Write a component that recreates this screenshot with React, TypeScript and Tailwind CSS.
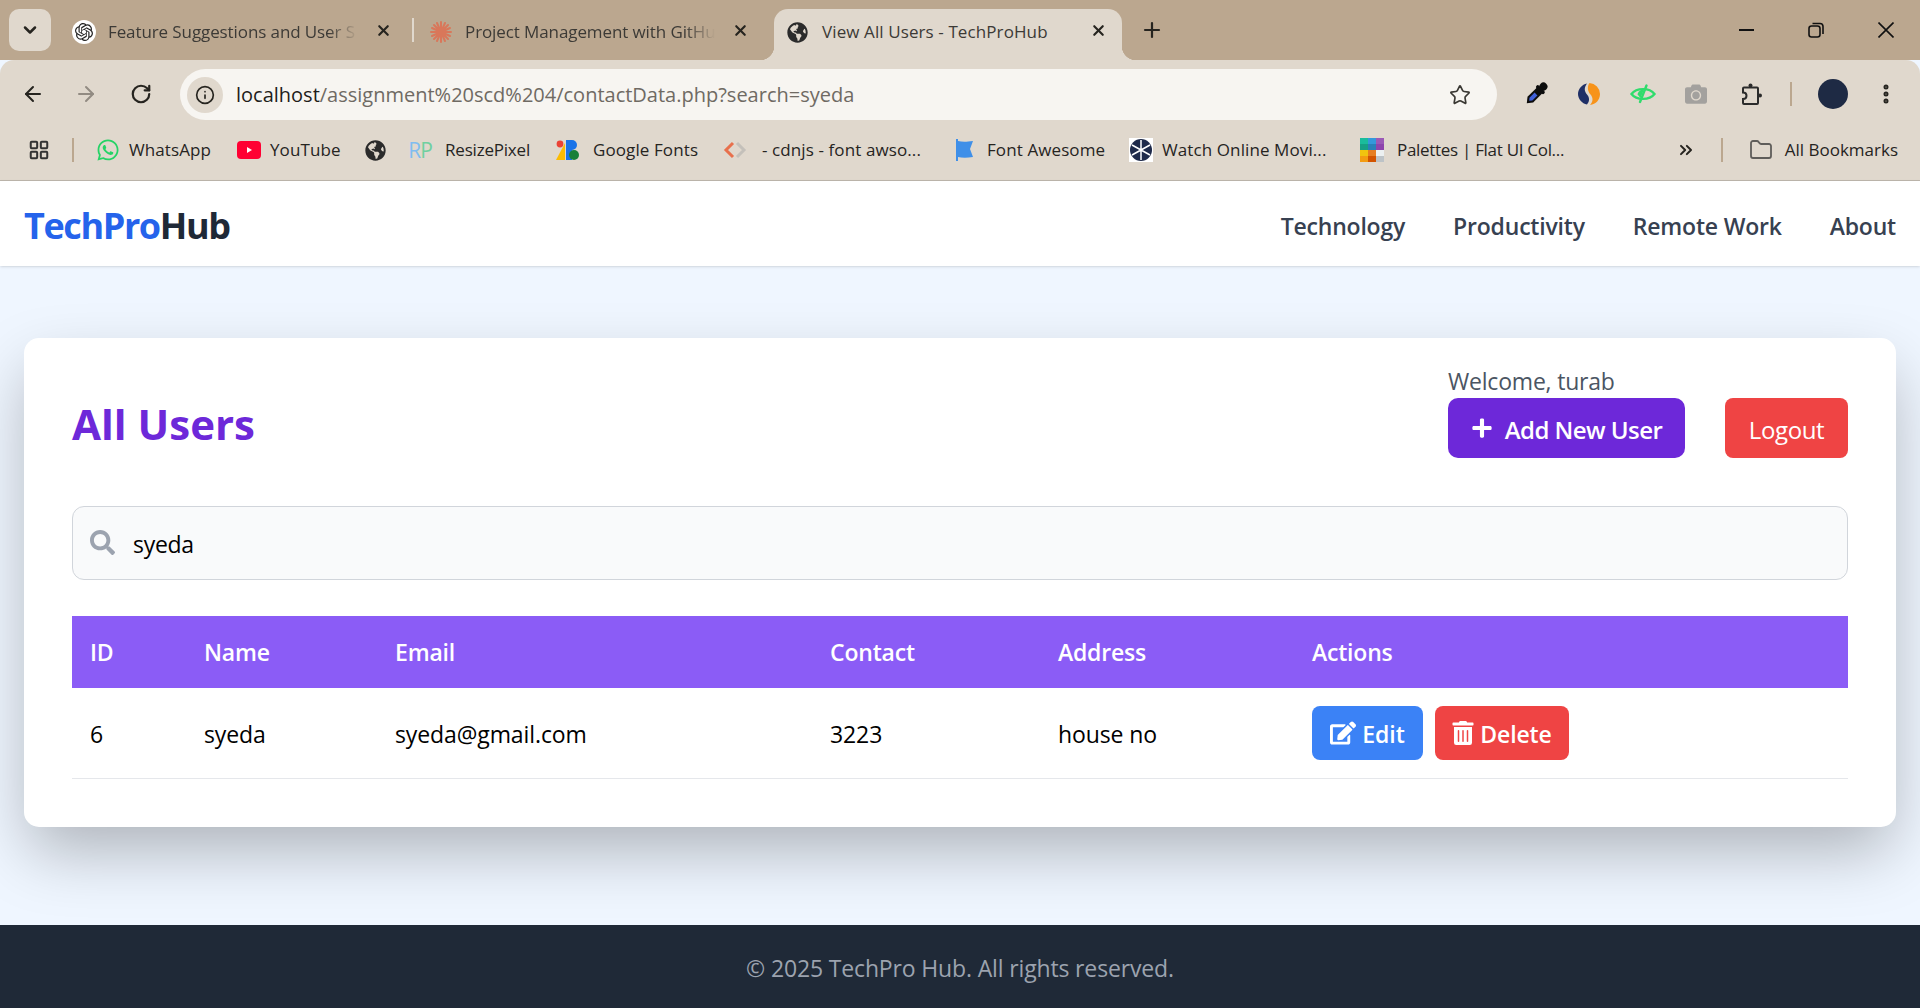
import { FaEdit, FaCamera, FaGlobeAmericas, FaPlus, FaSearch, FaTrashAlt, FaWhatsapp } from "react-icons/fa";
import { SiOpenai } from "react-icons/si";
import { ArrowLeft, ArrowRight, ChevronDown, ChevronsRight, EllipsisVertical, Folder, Info, LayoutGrid, Plus, RotateCw, Star, X } from "lucide-react";

const Globe = () => <FaGlobeAmericas className="w-[21px] h-[21px] text-[#2b2b2b]" />;

const ClaudeIcon = () => (
  <svg viewBox="0 0 24 24" className="w-6 h-6" stroke="#d9775a" strokeWidth="2" strokeLinecap="round">
    <path d="M12 2v20M2 12h20M5 5l14 14M19 5L5 19M8 3l8 18M16 3L8 21M3 8l18 8M21 8L3 16" />
  </svg>
);

const YouTubeIcon = () => (
  <svg viewBox="0 0 24 18" className="w-6 h-[18px]">
    <rect width="24" height="18" rx="4" fill="#ff0033" />
    <path d="M10 6l5 3-5 3z" fill="#fff" />
  </svg>
);

const GoogleFontsIcon = () => (
  <svg viewBox="0 0 24 20" className="w-6 h-5">
    <circle cx="4" cy="4" r="3.4" fill="#ea4335" />
    <path d="M0 20L9 3v17z" fill="#fbbc04" />
    <path d="M10 0h6a5 5 0 010 10h-6z" fill="#1a73e8" />
    <path d="M10 10h6v10h-6z" fill="#1a73e8" />
    <circle cx="18" cy="15" r="5" fill="#188038" />
  </svg>
);

const CdnjsIcon = () => (
  <svg viewBox="0 0 24 20" className="w-6 h-5" fill="none" strokeWidth="3">
    <path d="M10 3l-7 7 7 7" stroke="#e8704c" />
    <path d="M14 3l7 7-7 7" stroke="#c4c0ba" />
  </svg>
);

const FlagIcon = () => (
  <svg viewBox="0 0 20 24" className="w-5 h-6">
    <path d="M1 1h2v2c4 1 8 1 15 0l-3 8 3 8c-6 1-11 1-15 0v4H1z" fill="#3f8fe8" />
  </svg>
);

const ReelIcon = () => (
  <svg viewBox="0 0 24 24" className="w-6 h-6">
    <rect width="24" height="24" fill="#fff" />
    <circle cx="12" cy="12" r="11" fill="#1e2a4a" />
    <path d="M12 2v20M3 7l18 10M21 7L3 17" stroke="#fff" strokeWidth="1.5" />
  </svg>
);

const PaletteIcon = () => (
  <svg viewBox="0 0 24 24" className="w-6 h-6">
    <rect width="8" height="6" fill="#1abc9c" />
    <rect x="8" width="8" height="6" fill="#3498db" />
    <rect x="16" width="8" height="6" fill="#9b59b6" />
    <rect y="6" width="8" height="6" fill="#16a085" />
    <rect x="8" y="6" width="8" height="6" fill="#2980b9" />
    <rect x="16" y="6" width="8" height="6" fill="#8e44ad" />
    <rect y="12" width="8" height="6" fill="#f1c40f" />
    <rect x="8" y="12" width="8" height="6" fill="#e67e22" />
    <rect x="16" y="12" width="8" height="6" fill="#ecf0f1" />
    <rect y="18" width="8" height="6" fill="#f39c12" />
    <rect x="8" y="18" width="8" height="6" fill="#d35400" />
    <rect x="16" y="18" width="8" height="6" fill="#bdc3c7" />
  </svg>
);

const DropperIcon = () => (
  <svg viewBox="0 0 24 24" className="w-6 h-6">
    <g transform="rotate(45 12 12)">
      <circle cx="12" cy="1.5" r="4" fill="#0d0d0d" />
      <rect x="6.5" y="4" width="11" height="3.6" rx="1.8" fill="#0d0d0d" />
      <path d="M8 7h8v13l-4 5-4-5z" fill="#0d0d0d" />
      <path d="M10 12h4v7.2l-2 2.5-2-2.5z" fill="#3f5fd8" />
    </g>
  </svg>
);

const SwirlIcon = () => (
  <svg viewBox="0 0 24 24" className="w-6 h-6">
    <path d="M10 1.5c-3 4-3 7.5 0 11 3 3.500 2.500 7 0 10-5-1-9-5.500-9-10.500S5 2.500 10 1.500z" fill="#1f2f66" />
    <path d="M12.500 1A11 11 0 0123 12c0 5.500-4 10.500-10 11 3-3 3.500-7 .5-10.500-3-3.500-3.500-8-1-11.500z" fill="#f7931a" />
  </svg>
);

const EyeIcon = () => (
  <svg viewBox="0 0 26 24" className="w-[26px] h-6" fill="none" stroke="#2fdc6c" strokeWidth="2.4" strokeLinecap="round">
    <path d="M1.500 12c5-6.500 18-6.500 23 0-5 6.500-18 6.500-23 0z" />
    <path d="M16.500 3.500L10 20" />
    <path d="M7.500 12.500c.5-3 3-5 6.500-5l-3.500 8.500z" fill="#2fdc6c" stroke="none" />
  </svg>
);

const ExtensionIcon = () => (
  <svg viewBox="0 0 24 24" className="w-6 h-6" fill="#2b2b2b" stroke="#2b2b2b">
    <path d="M4 5.500h13a1 1 0 011 1v14.500a1 1 0 01-1 1H4a1 1 0 01-1-1v-4c2 0 3.500-1 3.500-3.250S5 10.500 3 10.500v-4a1 1 0 011-1z" fill="none" strokeWidth="2" />
    <circle cx="10.500" cy="3.500" r="2" stroke="none" />
    <circle cx="20" cy="13.500" r="2" stroke="none" />
  </svg>
);

interface TabProps {
  icon: React.ReactNode;
  title: string;
}

const Tab: React.FC<TabProps> = ({ icon, title }) => (
  <div className="flex items-center w-[361px] h-[46px] shrink-0 pl-[21px]">
    <span className="w-6 h-6 flex items-center justify-center shrink-0">{icon}</span>
    <span className="ml-3 w-[250px] whitespace-nowrap text-[17px] text-[#3c3a36] tracking-[-0.1px] [mask-image:linear-gradient(to_right,black_88%,transparent)]">{title}</span>
    <X className="ml-[17px] -mt-[3px] w-[17px] h-[17px] text-[#26241f] shrink-0" strokeWidth={3} />
  </div>
);

const bookmarks = [
  { icon: <FaWhatsapp className="w-6 h-6 text-[#25d366]" />, label: "WhatsApp", w: "w-[141px]", text: "ml-[9px] tracking-[0.1px]" },
  { icon: <YouTubeIcon />, label: "YouTube", w: "w-[126px]", text: "ml-[9px] tracking-[0.1px]" },
  { icon: <Globe />, label: "", w: "w-[45px]", text: "" },
  { icon: <span className="text-[21px] leading-none text-[#7fbdf0] tracking-[-1px]">R<span className="text-[#6fd0a0]">P</span></span>, label: "ResizePixel", w: "w-[148px]", text: "ml-[13px] tracking-[-0.2px]" },
  { icon: <GoogleFontsIcon />, label: "Google Fonts", w: "w-[167px]", text: "ml-[13px] tracking-[0.1px]" },
  { icon: <CdnjsIcon />, label: "- cdnjs - font awso...", w: "w-[230px]", text: "ml-[15px] tracking-[0.1px]" },
  { icon: <FlagIcon />, label: "Font Awesome", w: "w-[176px]", text: "ml-[10px] tracking-[0.1px]" },
  { icon: <ReelIcon />, label: "Watch Online Movi...", w: "w-[231px]", text: "ml-[9px] tracking-[0.1px]" },
  { icon: <PaletteIcon />, label: "Palettes | Flat UI Col...", w: "", text: "ml-[13px] tracking-[-0.3px]" },
];

const columns = [
  { label: "ID", w: "w-[114px]" },
  { label: "Name", w: "w-[191px]" },
  { label: "Email", w: "w-[435px]" },
  { label: "Contact", w: "w-[228px]" },
  { label: "Address", w: "w-[254px]" },
  { label: "Actions", w: "" },
];

const App = () => {
  return (
    <div className="min-h-screen flex flex-col bg-[#eff6ff] font-['Open_Sans','Noto_Sans',sans-serif] overflow-hidden">
      {/* browser tab strip */}
      <div className="h-[60px] bg-[#bba78f] flex items-start pt-[9px] shrink-0">
        <div className="ml-[9px] w-[42px] h-[42px] rounded-[10px] bg-[#e0d8cd] flex items-center justify-center shrink-0">
          <ChevronDown className="w-5 h-5 text-[#26241f]" strokeWidth={3} />
        </div>
        <Tab icon={<span className="w-6 h-6 rounded-full bg-white flex items-center justify-center"><SiOpenai className="w-[18px] h-[18px] text-[#222]" /></span>} title="Feature Suggestions and User S" />
        <div className="w-[2px] h-6 mt-[9px] bg-[#e0d8cd] shrink-0" />
        <div className="-ml-[6px] flex">
          <Tab icon={<ClaudeIcon />} title="Project Management with GitHu" />
        </div>
        <div className="relative ml-[5px] w-[348px] h-[51px] bg-[#e0d8cd] rounded-t-[14px] flex items-center pl-[13px] pb-[5px] shrink-0 before:absolute before:bottom-0 before:-left-[14px] before:w-[14px] before:h-[14px] before:bg-[radial-gradient(circle_at_0_0,transparent_14px,#e0d8cd_14.5px)] after:absolute after:bottom-0 after:-right-[14px] after:w-[14px] after:h-[14px] after:bg-[radial-gradient(circle_at_100%_0,transparent_14px,#e0d8cd_14.5px)]">
          <Globe />
          <span className="ml-[14px] w-[255px] whitespace-nowrap text-[17px] text-[#3c3a36] tracking-[0.1px]">View All Users - TechProHub</span>
          <X className="ml-[13px] -mt-[3px] w-[17px] h-[17px] text-[#26241f]" strokeWidth={3} />
        </div>
        <Plus className="ml-[18px] mt-[9px] w-6 h-6 text-[#26241f]" strokeWidth={2.2} />
        <div className="ml-auto flex items-center h-[42px]">
          <div className="w-[15px] h-[2px] bg-[#111]" />
          <svg viewBox="0 0 16 16" className="ml-[54px] w-[16px] h-[16px]" fill="none" stroke="#111" strokeWidth="1.6">
            <rect x="1" y="4" width="11" height="11" rx="2.500" />
            <path d="M4.500 1.500h7.500a3 3 0 013 3v7.500" />
          </svg>
          <svg viewBox="0 0 16 16" className="ml-[54px] mr-[26px] w-4 h-4" fill="none" stroke="#111" strokeWidth="1.6">
            <path d="M.500.500l15 15M15.500.500l-15 15" />
          </svg>
        </div>
      </div>

      {/* address bar */}
      <div className="h-[60px] bg-[#e0d8cd] rounded-t-[14px] flex items-end shrink-0">
        <div className="h-[60px] w-[180px] flex items-center shrink-0 pl-[21px] pt-[8px]">
          <ArrowLeft className="w-6 h-6 text-[#26241f]" strokeWidth={2} />
          <ArrowRight className="ml-[29px] w-6 h-6 text-[#928b82]" strokeWidth={2} />
          <RotateCw className="ml-[32px] w-[22px] h-[22px] text-[#26241f]" strokeWidth={2.4} />
        </div>
        <div className="w-[1317px] h-[51px] rounded-full bg-[#f7f5f1] flex items-center pl-[7px] shrink-0">
          <span className="w-9 h-9 rounded-full bg-[#e0d8cd] flex items-center justify-center">
            <Info className="w-5 h-5 text-[#26241f]" strokeWidth={2} />
          </span>
          <span className="ml-[13px] text-[20px] text-[#1f1d1a] whitespace-nowrap">localhost<span className="text-[#6f6a63]">/assignment%20scd%204/contactData.php?search=syeda</span></span>
          <Star className="ml-auto mr-[26px] w-[22px] h-[22px] text-[#3a3833]" strokeWidth={1.8} />
        </div>
        <div className="flex-1 h-[60px] flex items-center pl-[27px] pt-[8px]">
          <DropperIcon />
          <span className="ml-[29px]"><SwirlIcon /></span>
          <span className="ml-[29px]"><EyeIcon /></span>
          <FaCamera className="ml-[29px] w-[22px] h-[22px] text-[#a3a19e]" />
          <span className="ml-[33px]"><ExtensionIcon /></span>
          <div className="ml-[26px] w-[2px] h-6 bg-[#bba78f]" />
          <div className="ml-[26px] w-[30px] h-[30px] rounded-full bg-[#1e2a44]" />
          <EllipsisVertical className="ml-[26px] w-6 h-6 text-[#26241f]" strokeWidth={3} />
        </div>
      </div>

      {/* bookmarks */}
      <div className="h-[61px] bg-[#e0d8cd] border-b border-[#bdb6ac] flex items-center shrink-0 text-[17px] text-[#26241f]">
        <LayoutGrid className="ml-[28px] w-[22px] h-[22px] text-[#333]" strokeWidth={2.2} />
        <div className="ml-[22px] w-[2px] h-6 bg-[#bba78f]" />
        <div className="ml-[22px] flex items-center">
          {bookmarks.map((b, i) => (
            <div key={i} className={`flex items-center shrink-0 ${b.w}`}>
              <span className="w-6 flex items-center justify-center shrink-0">{b.icon}</span>
              {b.label && <span className={`${b.text} whitespace-nowrap`}>{b.label}</span>}
            </div>
          ))}
        </div>
        <ChevronsRight className="ml-auto w-5 h-5 text-[#26241f]" strokeWidth={2.4} />
        <div className="ml-[25px] w-[2px] h-6 bg-[#bba78f]" />
        <Folder className="ml-[26px] w-6 h-6 text-[#5f5d5a]" strokeWidth={1.8} />
        <span className="ml-[12px] mr-[22px] whitespace-nowrap">All Bookmarks</span>
      </div>

      {/* site nav */}
      <nav className="h-[85px] bg-white shadow-sm flex items-center justify-between px-6 pt-[5px] shrink-0">
        <span className="text-[36px] font-bold text-[#2563eb] tracking-[-1.4px]">TechPro<span className="text-[#1f2937]">Hub</span></span>
        <div className="flex items-center gap-12 text-[23px] font-semibold text-[#374151] tracking-[-0.2px]">
          <span>Technology</span>
          <span>Productivity</span>
          <span>Remote Work</span>
          <span>About</span>
        </div>
      </nav>

      <main className="flex-1 px-6 pt-[72px] pb-[98px]">
        <div className="bg-white rounded-[15px] shadow-[0_28px_65px_-5px_rgba(0,0,0,0.28)] px-12 pt-[30px] pb-12">
          <div className="flex items-end justify-between">
            <h1 className="h-[60px] flex items-center pb-[10px] text-[42px] font-bold text-[#6d28d9]">All Users</h1>
            <div className="w-[400px]">
              <p className="h-[30px] text-[23px] leading-[26px] text-[#4b5563] tracking-[-0.2px]">Welcome, turab</p>
              <div className="flex justify-between">
                <button className="w-[237px] h-[60px] rounded-[10px] bg-[#6d28d9] text-white text-[24px] font-semibold flex items-center justify-center gap-[12px] tracking-[-0.55px]">
                  <FaPlus className="w-[22px] h-[22px]" />
                  <span className="pt-[3px]">Add New User</span>
                </button>
                <button className="w-[123px] h-[60px] pt-[3px] rounded-[8px] bg-[#ef4444] text-white text-[24px] tracking-[-0.4px]">Logout</button>
              </div>
            </div>
          </div>

          <div className="relative mt-12">
            <FaSearch className="absolute left-[18px] top-[24px] w-[25px] h-[25px] text-[#9ca3af]" />
            <input readOnly value="syeda" className="w-full h-[74px] pl-[60px] pt-[2px] rounded-[12px] border border-[#d1d5db] bg-[#f9fafb] text-[23px] text-black outline-none tracking-[-0.3px]" />
          </div>

          <table className="mt-9 w-full table-fixed border-collapse text-[23px] text-black">
            <thead>
              <tr className="h-[72px] bg-[#8b5cf6] text-white text-left">
                {columns.map((c) => (
                  <th key={c.label} className={`${c.w} pl-[18px] font-semibold tracking-[-0.2px]`}>{c.label}</th>
                ))}
              </tr>
            </thead>
            <tbody>
              <tr className="h-[90px] border-b border-[#e5e7eb] tracking-[-0.1px]">
                <td className="pl-[18px] pt-[3px]">6</td>
                <td className="pl-[18px] pt-[3px]">syeda</td>
                <td className="pl-[18px] pt-[3px]">syeda@gmail.com</td>
                <td className="pl-[18px] pt-[3px]">3223</td>
                <td className="pl-[18px] pt-[3px]">house no</td>
                <td className="pl-[18px]">
                  <div className="flex gap-3">
                    <button className="w-[111px] h-[54px] rounded-[8px] bg-[#3b82f6] text-white font-semibold flex items-center justify-center gap-[6px]">
                      <FaEdit className="w-[26px] h-[26px]" />
                      <span className="pt-[2px]">Edit</span>
                    </button>
                    <button className="w-[134px] h-[54px] rounded-[8px] bg-[#ef4444] text-white font-semibold flex items-center justify-center gap-[6px]">
                      <FaTrashAlt className="w-[22px] h-[24px]" />
                      <span className="pt-[2px]">Delete</span>
                    </button>
                  </div>
                </td>
              </tr>
            </tbody>
          </table>
        </div>
      </main>

      <footer className="h-[84px] pt-[4px] bg-[#1f2937] flex items-center justify-center text-[23px] text-[#9ca3af] shrink-0 tracking-[-0.15px]">
        © 2025 TechPro Hub. All rights reserved.
      </footer>
    </div>
  );
};

export default App;
